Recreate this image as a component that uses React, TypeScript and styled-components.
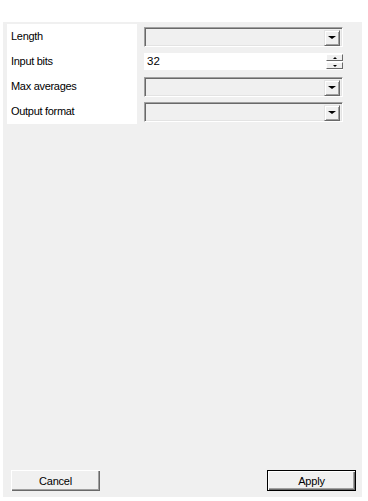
import styled, { createGlobalStyle } from 'styled-components';

const GlobalStyle = createGlobalStyle`
  html, body {
    margin: 0;
    padding: 0;
    background: #ffffff;
  }
  body {
    font-family: "Liberation Sans", Arial, sans-serif;
    font-size: 11px;
    color: #000000;
  }
`;

const Page = styled.div`
  padding: 22px 0 0 3px;
  width: 368px;
  height: 501px;
  box-sizing: border-box;
`;

const Panel = styled.div`
  width: 359px;
  height: 475px;
  background: #f0f0f0;
  display: flex;
  flex-direction: column;
  justify-content: space-between;
`;

const Form = styled.div`
  display: flex;
  gap: 7px;
  padding: 2px 0 0 4px;
`;

const LabelColumn = styled.div`
  width: 130px;
  background: #ffffff;
  display: flex;
  flex-direction: column;
`;

const ControlColumn = styled.div`
  width: 199px;
  display: flex;
  flex-direction: column;
`;

const Label = styled.div`
  height: 25px;
  line-height: 25px;
  padding-left: 4px;
  letter-spacing: -0.3px;
  white-space: nowrap;
`;

const Cell = styled.div`
  height: 25px;
  display: flex;
  align-items: center;
`;

const Combo = styled.div`
  width: 199px;
  height: 20px;
  box-sizing: border-box;
  background: #f0f0f0;
  border-top: 1px solid #a0a0a0;
  border-left: 1px solid #a0a0a0;
  border-right: 1px solid #ffffff;
  border-bottom: 1px solid #ffffff;
  box-shadow: inset 1px 1px 0 #696969, inset -1px -1px 0 #e3e3e3;
  display: flex;
  justify-content: flex-end;
  padding: 2px;
`;

const DropButton = styled.div`
  width: 16px;
  height: 16px;
  box-sizing: border-box;
  background: #f0f0f0;
  border-top: 1px solid #e3e3e3;
  border-left: 1px solid #e3e3e3;
  border-right: 1px solid #696969;
  border-bottom: 1px solid #696969;
  box-shadow: inset 1px 1px 0 #ffffff, inset -1px -1px 0 #a0a0a0;
  display: flex;
  align-items: center;
  justify-content: center;
`;

const Arrow = styled.div<{ $size: number; $up?: boolean }>`
  width: 0;
  height: 0;
  border-left: ${(p) => p.$size}px solid transparent;
  border-right: ${(p) => p.$size}px solid transparent;
  ${(p) =>
    p.$up
      ? `border-bottom: ${Math.ceil(p.$size / 1.5)}px solid #000;`
      : `border-top: ${Math.ceil(p.$size / 1.5)}px solid #000;`}
`;

const SpinBox = styled.div`
  width: 199px;
  height: 17px;
  background: #ffffff;
  display: flex;
  align-items: stretch;
`;

const SpinText = styled.div`
  flex: 1;
  padding-left: 3px;
  line-height: 17px;
  font-size: 11.5px;
`;

const SpinButtons = styled.div`
  width: 17px;
  display: flex;
  flex-direction: column;
  justify-content: space-between;
  padding: 1px 0;
`;

const SpinButton = styled.div`
  height: 7px;
  box-sizing: border-box;
  background: #f0f0f0;
  border-right: 1px solid #696969;
  border-bottom: 1px solid #696969;
  border-top: 1px solid #ffffff;
  border-left: 1px solid #ffffff;
  display: flex;
  align-items: center;
  justify-content: center;
`;

const Footer = styled.div`
  display: flex;
  justify-content: space-between;
  padding: 0 6px 6px 8px;
`;

const Button = styled.button<{ $default?: boolean }>`
  width: 89px;
  height: 21px;
  box-sizing: border-box;
  padding: 0;
  font-family: "Liberation Sans", Arial, sans-serif;
  font-size: 11px;
  letter-spacing: -0.2px;
  color: #000;
  background: #f0f0f0;
  border: ${(p) => (p.$default ? '1px solid #000' : 'none')};
  box-shadow: ${(p) =>
    p.$default
      ? 'inset 1px 1px 0 #ffffff, inset -1px -1px 0 #696969, inset -2px -2px 0 #a0a0a0'
      : 'inset 1px 1px 0 #ffffff, inset -1px -1px 0 #696969, inset -2px -2px 0 #a0a0a0'};
`;

const rows = ['Length', 'Input bits', 'Max averages', 'Output format'];

export default function App() {
  return (
    <>
      <GlobalStyle />
      <Page>
        <Panel>
          <Form>
            <LabelColumn>
              {rows.map((r) => (
                <Label key={r}>{r}</Label>
              ))}
            </LabelColumn>
            <ControlColumn>
              <Cell>
                <Combo>
                  <DropButton>
                    <Arrow $size={4} />
                  </DropButton>
                </Combo>
              </Cell>
              <Cell>
                <SpinBox>
                  <SpinText>32</SpinText>
                  <SpinButtons>
                    <SpinButton>
                      <Arrow $size={2} $up />
                    </SpinButton>
                    <SpinButton>
                      <Arrow $size={2} />
                    </SpinButton>
                  </SpinButtons>
                </SpinBox>
              </Cell>
              <Cell>
                <Combo>
                  <DropButton>
                    <Arrow $size={4} />
                  </DropButton>
                </Combo>
              </Cell>
              <Cell>
                <Combo>
                  <DropButton>
                    <Arrow $size={4} />
                  </DropButton>
                </Combo>
              </Cell>
            </ControlColumn>
          </Form>
          <Footer>
            <Button>Cancel</Button>
            <Button $default>Apply</Button>
          </Footer>
        </Panel>
      </Page>
    </>
  );
}
